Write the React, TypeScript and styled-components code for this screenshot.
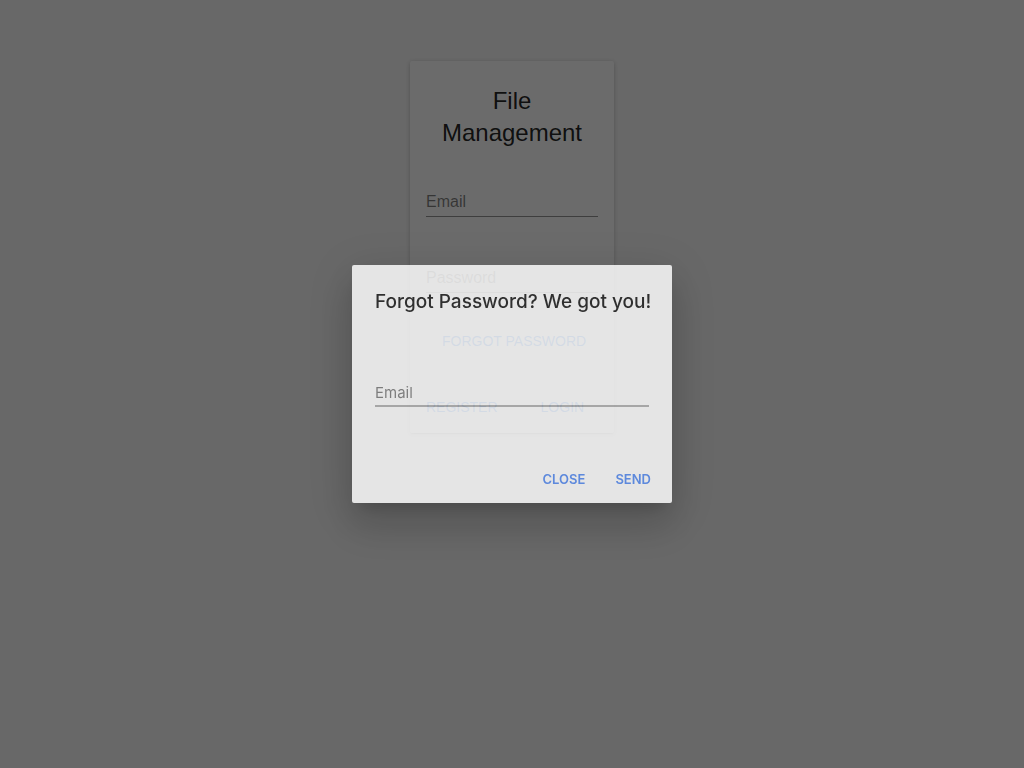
import React from "react";
import styled, { createGlobalStyle } from "styled-components";

const GlobalStyle = createGlobalStyle`
  *, *::before, *::after { box-sizing: border-box; }
  body {
    margin: 0;
    background: #f8f8f8;
    color: rgba(0, 0, 0, 0.87);
    font-family: "Liberation Sans", Arial, sans-serif;
    font-size: 16px;
  }
`;

const Page = styled.main`
  min-height: 100vh;
  padding: 61px 16px;
`;

const LoginCard = styled.form`
  width: 20%;
  min-width: 204px;
  margin: 0 auto;
  padding-bottom: 8px;
  border-radius: 2px;
  background: #fff;
  box-shadow: 0 2px 1px -1px rgba(0, 0, 0, 0.12), 0 1px 1px rgba(0, 0, 0, 0.08),
    0 1px 5px rgba(0, 0, 0, 0.2);
`;

const CardTitle = styled.h1`
  margin: 0;
  padding: 24px 16px;
  font-size: 24px;
  line-height: 32px;
  font-weight: 400;
  text-align: center;
`;

const CardFields = styled.div`
  display: flex;
  flex-direction: column;
  gap: 46px;
  padding: 14px 16px 24px;
`;

const TextInput = styled.input`
  display: block;
  width: 100%;
  height: 30px;
  padding: 0;
  border: 0;
  border-bottom: 1px solid rgba(0, 0, 0, 0.42);
  border-radius: 0;
  outline: 0;
  background: transparent;
  color: inherit;
  font-family: inherit;
  font-size: 16px;

  &::placeholder {
    color: rgba(0, 0, 0, 0.5);
    opacity: 1;
  }
`;

const FlatButton = styled.button`
  height: 36px;
  padding: 0 16px;
  border: 0;
  background: transparent;
  color: #1976f2;
  font-family: inherit;
  font-size: 14px;
  text-transform: uppercase;
  white-space: nowrap;
  cursor: pointer;
`;

const ForgotRow = styled.div`
  display: flex;
  padding: 6px 16px;
`;

const CardActions = styled.div`
  display: flex;
  gap: 11px;
  padding-top: 24px;
`;

const Overlay = styled.div`
  position: fixed;
  inset: 0;
  display: flex;
  align-items: center;
  justify-content: center;
  background: rgba(0, 0, 0, 0.58);
`;

const Dialog = styled.form`
  width: 320px;
  padding: 21px 23px 6px;
  border-radius: 2px;
  background: #fff;
  opacity: 0.82;
  font-family: Inter, sans-serif;
  box-shadow: 0 11px 15px -7px rgba(0, 0, 0, 0.2),
    0 24px 38px 3px rgba(0, 0, 0, 0.14), 0 9px 46px 8px rgba(0, 0, 0, 0.12);
`;

const DialogTitle = styled.h2`
  margin: 0 0 61px;
  font-size: 19px;
  line-height: 32px;
  font-weight: 500;
  white-space: nowrap;
`;

const DialogInput = styled(TextInput)`
  height: 28px;
  border-bottom: 2px solid rgba(0, 0, 0, 0.3);
  font-size: 15px;
`;

const DialogActions = styled.div`
  display: flex;
  justify-content: flex-end;
  gap: 2px;
  padding-top: 54px;
  margin-right: -16px;
`;

const DialogButton = styled(FlatButton)`
  padding: 0 14px;
  font-size: 13px;
  font-weight: 600;
  color: #5a8ff5;
`;

export default function App() {
  return (
    <>
      <GlobalStyle />
      <Page>
        <LoginCard>
          <CardTitle>File Management</CardTitle>
          <CardFields>
            <TextInput type="email" placeholder="Email" aria-label="Email" />
            <TextInput type="password" placeholder="Password" aria-label="Password" />
          </CardFields>
          <ForgotRow>
            <FlatButton type="button">Forgot Password</FlatButton>
          </ForgotRow>
          <CardActions>
            <FlatButton type="button">Register</FlatButton>
            <FlatButton type="button">Login</FlatButton>
          </CardActions>
        </LoginCard>
      </Page>
      <Overlay>
        <Dialog role="dialog" aria-modal="true" aria-labelledby="forgot-title">
          <DialogTitle id="forgot-title">Forgot Password? We got you!</DialogTitle>
          <DialogInput type="email" placeholder="Email" aria-label="Account email" />
          <DialogActions>
            <DialogButton type="button">Close</DialogButton>
            <DialogButton type="button">Send</DialogButton>
          </DialogActions>
        </Dialog>
      </Overlay>
    </>
  );
}
